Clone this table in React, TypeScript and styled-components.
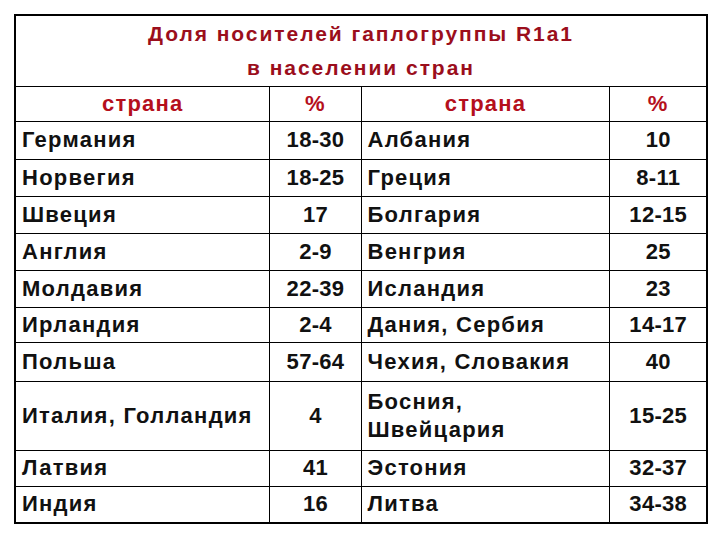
import React from "react";
import styled, { createGlobalStyle } from "styled-components";

const Global = createGlobalStyle`
  html, body { margin: 0; padding: 0; background: #ffffff; }
  body { font-family: "Liberation Sans", Arial, sans-serif; }
`;

const Page = styled.div`
  width: 720px;
  height: 540px;
  padding: 14px 0 0 14px;
  box-sizing: border-box;
  background: #fff;
`;

const Table = styled.table`
  border-collapse: collapse;
  table-layout: fixed;
  width: 692px;
  border: 2px solid #000;
  font-family: "Liberation Sans", Arial, sans-serif;
  font-weight: bold;
  font-size: 22px;
  color: #111;
`;

const Row = styled.tr<{ $h: number }>`
  height: ${(p) => p.$h}px;
`;

const TitleCell = styled.td`
  text-align: center;
  color: #9b0e1c;
  font-size: 21px;
  letter-spacing: 1.95px;
  line-height: 34px;
  padding: 1px 0 0 0;
  border-bottom: 1px solid #000;
`;

const Cell = styled.td<{ $center?: boolean; $head?: boolean; $num?: boolean }>`
  border: 1px solid #000;
  padding: 0 5px 0 6px;
  text-align: ${(p) => (p.$center ? "center" : "left")};
  color: ${(p) => (p.$head ? "#b50f1c" : "#111")};
  letter-spacing: ${(p) => (p.$num ? "0.3px" : "1.25px")};
  line-height: 26px;
  vertical-align: middle;
  white-space: nowrap;
`;

const Wrap = styled.span`
  white-space: normal;
  display: block;
  line-height: 28px;
`;

type R = { a: string; b: string; c: React.ReactNode; d: string; h: number };

const rows: R[] = [
  { a: "Германия", b: "18-30", c: "Албания", d: "10", h: 38 },
  { a: "Норвегия", b: "18-25", c: "Греция", d: "8-11", h: 37 },
  { a: "Швеция", b: "17", c: "Болгария", d: "12-15", h: 37 },
  { a: "Англия", b: "2-9", c: "Венгрия", d: "25", h: 37 },
  { a: "Молдавия", b: "22-39", c: "Исландия", d: "23", h: 37 },
  { a: "Ирландия", b: "2-4", c: "Дания, Сербия", d: "14-17", h: 35 },
  { a: "Польша", b: "57-64", c: "Чехия, Словакия", d: "40", h: 39 },
  {
    a: "Италия, Голландия",
    b: "4",
    c: (
      <Wrap>
        Босния,
        <br />
        Швейцария
      </Wrap>
    ),
    d: "15-25",
    h: 69,
  },
  { a: "Латвия", b: "41", c: "Эстония", d: "32-37", h: 36 },
  { a: "Индия", b: "16", c: "Литва", d: "34-38", h: 37 },
];

export default function App() {
  return (
    <Page>
      <Global />
      <Table>
        <colgroup>
          <col style={{ width: 254 }} />
          <col style={{ width: 92 }} />
          <col style={{ width: 248 }} />
          <col style={{ width: 98 }} />
        </colgroup>
        <tbody>
          <Row $h={71}>
            <TitleCell colSpan={4}>
              Доля носителей гаплогруппы R1a1
              <br />в населении стран
            </TitleCell>
          </Row>
          <Row $h={35}>
            <Cell $center $head>страна</Cell>
            <Cell $center $head>%</Cell>
            <Cell $center $head>страна</Cell>
            <Cell $center $head>%</Cell>
          </Row>
          {rows.map((r) => (
            <Row $h={r.h} key={r.a}>
              <Cell>{r.a}</Cell>
              <Cell $center $num>{r.b}</Cell>
              <Cell>{r.c}</Cell>
              <Cell $center $num>{r.d}</Cell>
            </Row>
          ))}
        </tbody>
      </Table>
    </Page>
  );
}
